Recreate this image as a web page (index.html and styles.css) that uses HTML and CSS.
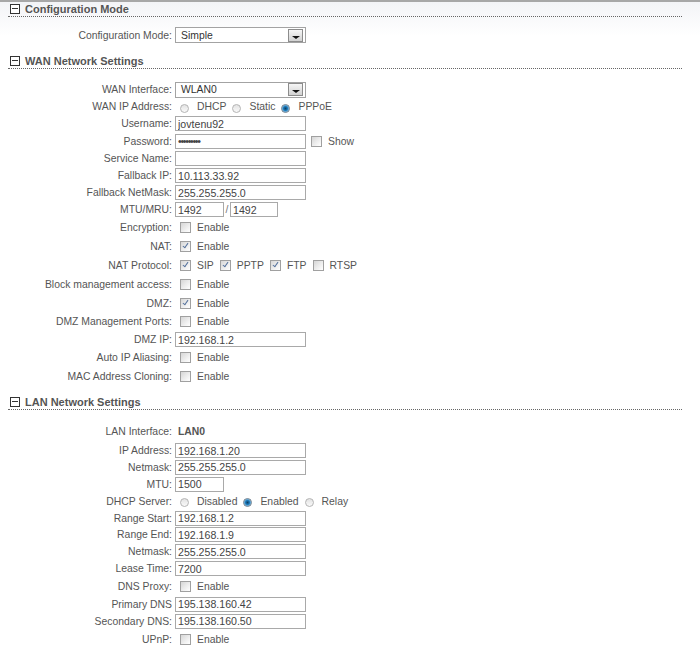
FILE: index.html
```html
<!DOCTYPE html>
<html lang="en">
<head>
    <meta charset="UTF-8">
    <meta name="viewport" content="width=device-width, initial-scale=1.0">
    <title>Network Settings</title>
    <link rel="stylesheet" href="styles.css">
</head>
<body>
    <div class="section-head"><span class="toggle"></span>Configuration Mode</div>
    <div class="fields first">
        <div class="row tall">
            <label class="lbl">Configuration Mode:</label>
            <div class="select"><span class="sel-text">Simple</span><span class="arrow"></span></div>
        </div>
    </div>

    <div class="section-head"><span class="toggle"></span>WAN Network Settings</div>
    <div class="fields wan">
        <div class="row">
            <label class="lbl">WAN Interface:</label>
            <div class="select"><span class="sel-text">WLAN0</span><span class="arrow"></span></div>
        </div>
        <div class="row">
            <label class="lbl">WAN IP Address:</label>
            <span class="opt"><span class="rd"></span>DHCP</span>
            <span class="opt"><span class="rd"></span>Static</span>
            <span class="opt"><span class="rd on"></span>PPPoE</span>
        </div>
        <div class="row">
            <label class="lbl">Username:</label>
            <input class="txt" type="text" value="jovtenu92">
        </div>
        <div class="row">
            <label class="lbl">Password:</label>
            <input class="txt pw" type="password" value="secret123">
            <span class="opt show"><span class="cb"></span>Show</span>
        </div>
        <div class="row">
            <label class="lbl">Service Name:</label>
            <input class="txt" type="text" value="">
        </div>
        <div class="row">
            <label class="lbl">Fallback IP:</label>
            <input class="txt" type="text" value="10.113.33.92">
        </div>
        <div class="row">
            <label class="lbl">Fallback NetMask:</label>
            <input class="txt" type="text" value="255.255.255.0">
        </div>
        <div class="row">
            <label class="lbl">MTU/MRU:</label>
            <input class="txt mtu" type="text" value="1492">
            <span class="slash">/</span>
            <input class="txt mru" type="text" value="1492">
        </div>
        <div class="row check">
            <label class="lbl">Encryption:</label>
            <span class="opt"><span class="cb"></span>Enable</span>
        </div>
        <div class="row check">
            <label class="lbl">NAT:</label>
            <span class="opt"><span class="cb on"></span>Enable</span>
        </div>
        <div class="row check">
            <label class="lbl">NAT Protocol:</label>
            <span class="opt"><span class="cb on"></span>SIP</span>
            <span class="opt"><span class="cb on"></span>PPTP</span>
            <span class="opt"><span class="cb on"></span>FTP</span>
            <span class="opt"><span class="cb"></span>RTSP</span>
        </div>
        <div class="row check">
            <label class="lbl">Block management access:</label>
            <span class="opt"><span class="cb"></span>Enable</span>
        </div>
        <div class="row check">
            <label class="lbl">DMZ:</label>
            <span class="opt"><span class="cb on"></span>Enable</span>
        </div>
        <div class="row check">
            <label class="lbl">DMZ Management Ports:</label>
            <span class="opt"><span class="cb"></span>Enable</span>
        </div>
        <div class="row">
            <label class="lbl">DMZ IP:</label>
            <input class="txt" type="text" value="192.168.1.2">
        </div>
        <div class="row check">
            <label class="lbl">Auto IP Aliasing:</label>
            <span class="opt"><span class="cb"></span>Enable</span>
        </div>
        <div class="row check">
            <label class="lbl">MAC Address Cloning:</label>
            <span class="opt"><span class="cb"></span>Enable</span>
        </div>
    </div>

    <div class="section-head"><span class="toggle"></span>LAN Network Settings</div>
    <div class="fields lan">
        <div class="row iface">
            <label class="lbl">LAN Interface:</label>
            <span class="value">LAN0</span>
        </div>
        <div class="row">
            <label class="lbl">IP Address:</label>
            <input class="txt" type="text" value="192.168.1.20">
        </div>
        <div class="row">
            <label class="lbl">Netmask:</label>
            <input class="txt" type="text" value="255.255.255.0">
        </div>
        <div class="row">
            <label class="lbl">MTU:</label>
            <input class="txt mtu" type="text" value="1500">
        </div>
        <div class="row">
            <label class="lbl">DHCP Server:</label>
            <span class="opt"><span class="rd"></span>Disabled</span>
            <span class="opt"><span class="rd on"></span>Enabled</span>
            <span class="opt"><span class="rd"></span>Relay</span>
        </div>
        <div class="row">
            <label class="lbl">Range Start:</label>
            <input class="txt" type="text" value="192.168.1.2">
        </div>
        <div class="row">
            <label class="lbl">Range End:</label>
            <input class="txt" type="text" value="192.168.1.9">
        </div>
        <div class="row">
            <label class="lbl">Netmask:</label>
            <input class="txt" type="text" value="255.255.255.0">
        </div>
        <div class="row">
            <label class="lbl">Lease Time:</label>
            <input class="txt" type="text" value="7200">
        </div>
        <div class="row check">
            <label class="lbl">DNS Proxy:</label>
            <span class="opt"><span class="cb"></span>Enable</span>
        </div>
        <div class="row">
            <label class="lbl">Primary DNS</label>
            <input class="txt" type="text" value="195.138.160.42">
        </div>
        <div class="row">
            <label class="lbl">Secondary DNS:</label>
            <input class="txt" type="text" value="195.138.160.50">
        </div>
        <div class="row check">
            <label class="lbl">UPnP:</label>
            <span class="opt"><span class="cb"></span>Enable</span>
        </div>
    </div>
</body>
</html>
```

FILE: styles.css
```css
body {
    margin: 0;
    border-top: 2px solid #a7a7a7;
    background: #fff linear-gradient(to bottom, #f2f3f6 0, #fff 36px) no-repeat;
    font-family: "Liberation Sans", Arial, sans-serif;
    font-size: 10.4px;
    color: #555;
}
.section-head {
    display: flex;
    align-items: center;
    height: 14px;
    margin: 0 18px 0 8px;
    padding-left: 2px;
    border-bottom: 1px dotted #666;
    font-size: 11px;
    font-weight: bold;
    color: #555;
}
.toggle {
    position: relative;
    width: 8px;
    height: 8px;
    margin-right: 5px;
    border: 1px solid #333;
    background: #fff;
}
.toggle::after {
    content: "";
    position: absolute;
    left: 1px;
    right: 1px;
    top: 3px;
    height: 1px;
    background: #333;
}
.fields {
    padding-top: 11px;
    margin-bottom: 10px;
}
.fields.first {
    padding-top: 9px;
}
.fields.wan {
    padding-top: 12px;
    margin-bottom: 9px;
}
.fields.lan {
    padding-top: 11px;
}
.row {
    display: flex;
    align-items: center;
    height: 17.2px;
}
.row.tall {
    height: 18px;
}
.row.check {
    height: 18.8px;
}
.lan .row {
    height: 16.9px;
}
.lan .row.check {
    height: 18.8px;
}
.lan .row.iface {
    height: 21px;
}
.lbl {
    width: 172px;
    padding-right: 3px;
    text-align: right;
    white-space: nowrap;
}
.value {
    padding-left: 3px;
    font-weight: bold;
    color: #555;
}
.txt {
    box-sizing: border-box;
    width: 131px;
    height: 15px;
    margin: 0;
    padding: 0 2px;
    border: 1px solid #a9a9a9;
    font-family: "Liberation Sans", Arial, sans-serif;
    font-size: 10.6px;
    color: #444;
    background: #fff;
    outline: none;
}
.txt.pw {
    letter-spacing: -1.3px;
}
.txt.mtu {
    width: 49px;
}
.txt.mru {
    width: 48px;
}
.slash {
    width: 6px;
    text-align: center;
    color: #777;
}
.select {
    box-sizing: border-box;
    display: flex;
    align-items: center;
    width: 131px;
    height: 16px;
    padding: 1px 2px 1px 5px;
    border: 1px solid #a3a3a3;
    background: #fff;
    color: #333;
}
.sel-text {
    flex: 1;
}
.arrow {
    box-sizing: border-box;
    display: flex;
    align-items: flex-end;
    justify-content: center;
    width: 15px;
    height: 13px;
    padding-bottom: 2px;
    border: 1px solid #8c8c8c;
    background: linear-gradient(to bottom, #f6f6f6, #d2d2d2);
}
.arrow::after {
    content: "";
    border-top: 3px solid #111;
    border-left: 4px solid transparent;
    border-right: 4px solid transparent;
}
.opt {
    display: flex;
    align-items: center;
    margin-left: 5px;
}
.opt + .opt {
    margin-left: 6px;
}
.opt.show {
    margin-left: 5px;
}
.cb {
    box-sizing: border-box;
    position: relative;
    width: 11px;
    height: 11px;
    margin-right: 6px;
    border: 1px solid #a0a0a0;
    background: linear-gradient(135deg, #d6d6d6, #f4f4f4 70%, #fff);
}
.cb.on::after {
    content: "";
    position: absolute;
    left: 3px;
    top: 0;
    width: 2px;
    height: 5px;
    border-right: 1.5px solid #56739d;
    border-bottom: 1.5px solid #56739d;
    transform: rotate(35deg);
}
.rd {
    box-sizing: border-box;
    width: 9px;
    height: 9px;
    margin-right: 8px;
    margin-top: 3px;
    border: 1px solid #b4b4b4;
    border-radius: 50%;
    background: linear-gradient(to bottom, #e2e2e2, #fafafa);
}
.rd.on {
    border-color: #6d7f8f;
    background: radial-gradient(circle at 50% 50%, #0d3f63 0, #1b78b8 2px, #5aa6d8 3px, #dfe8ee 4px);
}
```
